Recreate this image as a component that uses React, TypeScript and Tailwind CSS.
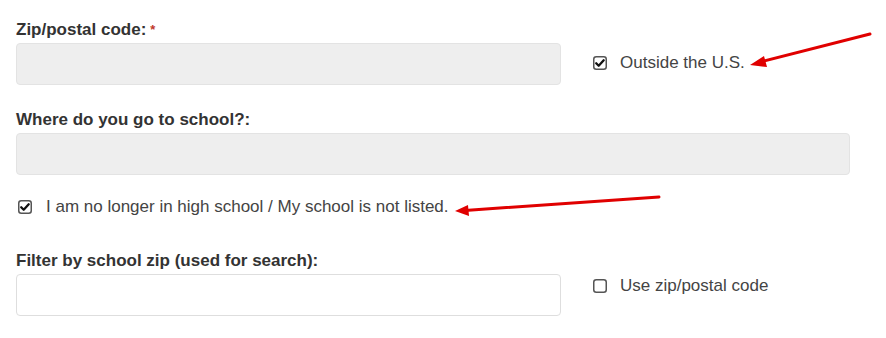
function Check({ checked }: { checked: boolean }) {
  return (
    <svg width="14" height="14" viewBox="0 0 14 14" aria-hidden="true" className="shrink-0">
      <rect x="0.75" y="0.75" width="12.5" height="12.5" rx="2.5" fill="#fff" stroke="#555" strokeWidth="1.5" />
      {checked && (
        <path d="M3.2 7.2l2.5 2.5 5-5.4" fill="none" stroke="#111" strokeWidth="2.3" strokeLinecap="round" strokeLinejoin="round" />
      )}
    </svg>
  );
}

function Label({ children }: { children: React.ReactNode }) {
  return <div className="text-[17px] font-bold leading-5 text-[#333]">{children}</div>;
}

export default function App() {
  return (
    <div className="relative h-[338px] w-[886px] bg-white font-['Liberation_Sans',Arial,sans-serif]">
      <div className="px-4 pt-[20px]">
        {/* Zip */}
        <div className="flex items-end">
          <div className="w-[545px]">
            <Label>
              Zip/postal code:<span className="ml-1 align-top text-[13px] text-[#c0392b]">*</span>
            </Label>
            <div className="mt-[3px] h-[42px] rounded border border-[#e3e3e3] bg-[#eeeeee]" />
          </div>
          <label className="mb-[12px] ml-[32px] flex items-center gap-[13px] text-[17px] leading-5 text-[#444]">
            <Check checked />
            Outside the U.S.
          </label>
        </div>

        {/* School */}
        <div className="mt-[25px]">
          <Label>Where do you go to school?:</Label>
          <div className="mt-[3px] h-[42px] w-[834px] rounded border border-[#e3e3e3] bg-[#eeeeee]" />
        </div>

        <label className="ml-[2px] mt-[22px] flex items-center gap-[14px] text-[17px] leading-5 text-[#444]">
          <Check checked />
          I am no longer in high school / My school is not listed.
        </label>

        {/* Filter */}
        <div className="mt-[34px] flex items-end">
          <div className="w-[545px]">
            <Label>Filter by school zip (used for search):</Label>
            <div className="mt-[3px] h-[42px] rounded border border-[#dedede] bg-white" />
          </div>
          <label className="mb-[20px] ml-[32px] flex items-center gap-[13px] text-[17px] leading-5 text-[#444]">
            <Check checked={false} />
            Use zip/postal code
          </label>
        </div>
      </div>

      {/* annotation arrows */}
      <svg className="pointer-events-none absolute inset-0" width="886" height="338" aria-hidden="true">
        <line x1="870" y1="34" x2="760" y2="62" stroke="#e00000" strokeWidth="3" strokeLinecap="round" />
        <polygon points="750,65 764,56 767,67" fill="#e00000" />
        <line x1="659" y1="197" x2="465" y2="210.5" stroke="#e00000" strokeWidth="3" strokeLinecap="round" />
        <polygon points="455,211 468,205 469,216" fill="#e00000" />
      </svg>
    </div>
  );
}
